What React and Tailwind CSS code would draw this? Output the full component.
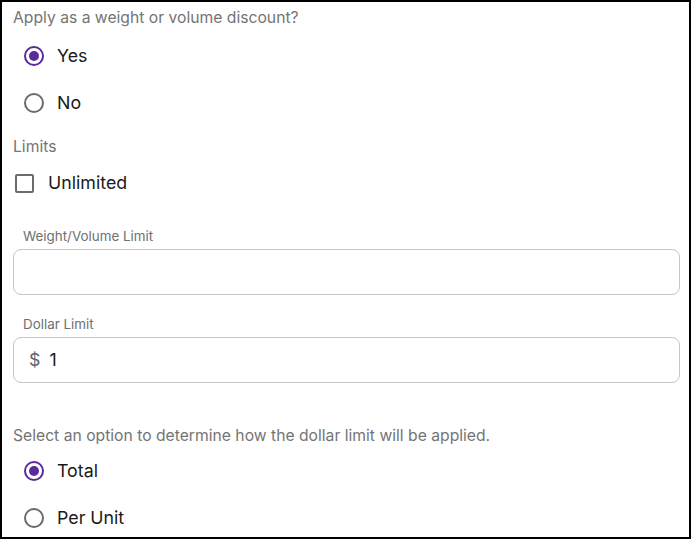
import React from 'react';

function Radio({ checked, label }) {
  return (
    <div className="flex h-[47px] items-center">
      <span
        className={`ml-[11px] flex h-[20px] w-[20px] items-center justify-center rounded-full border-2 ${
          checked ? 'border-[#5b2a9c]' : 'border-[#6b6b6b]'
        }`}
      >
        {checked && <span className="h-[10px] w-[10px] rounded-full bg-[#5b2a9c]" />}
      </span>
      <span className="ml-[13px] text-[17.8px] leading-[22px] text-[#1a1a1a]">{label}</span>
    </div>
  );
}

function Field({ label, children, className }) {
  return (
    <div className={className}>
      <div className="ml-[10px] h-[16px] text-[13.4px] leading-[16px] text-[#6f6f6f]">{label}</div>
      <div className="mt-[5px] flex h-[46px] w-full items-center rounded-[8px] border border-[#c6c6c6] bg-white px-[15px]">
        {children}
      </div>
    </div>
  );
}

export default function App() {
  return (
    <div
      className="h-[539px] w-[691px] overflow-hidden border-2 border-black bg-white pl-[11px] pr-[9px] pt-[6px]"
      style={{ fontFamily: 'Inter, "Liberation Sans", sans-serif' }}
    >
      <div className="h-[20px] text-[15.7px] leading-[20px] text-[#747474]">
        Apply as a weight or volume discount?
      </div>
      <div className="mt-[4px]">
        <Radio checked label="Yes" />
        <Radio label="No" />
      </div>

      <div className="mt-[11px] h-[20px] text-[15.7px] leading-[20px] text-[#747474]">Limits</div>
      <div className="mt-[6px] flex h-[40px] items-center">
        <span className="ml-[2px] h-[19px] w-[19px] rounded-[2px] border-2 border-[#6b6b6b]" />
        <span className="ml-[14px] text-[17.8px] leading-[22px] text-[#1a1a1a]">Unlimited</span>
      </div>

      <Field label="Weight/Volume Limit" className="mt-[25px]" />
      <Field label="Dollar Limit" className="mt-[21px]">
        <span className="text-[17.8px] text-[#5a6473]">$</span>
        <span className="ml-[9px] text-[17.8px] text-[#1a1a1a]">1</span>
      </Field>

      <div className="mt-[43px] h-[20px] text-[15.7px] leading-[20px] text-[#747474]">
        Select an option to determine how the dollar limit will be applied.
      </div>
      <div className="mt-[1px]">
        <Radio checked label="Total" />
        <Radio label="Per Unit" />
      </div>
    </div>
  );
}
